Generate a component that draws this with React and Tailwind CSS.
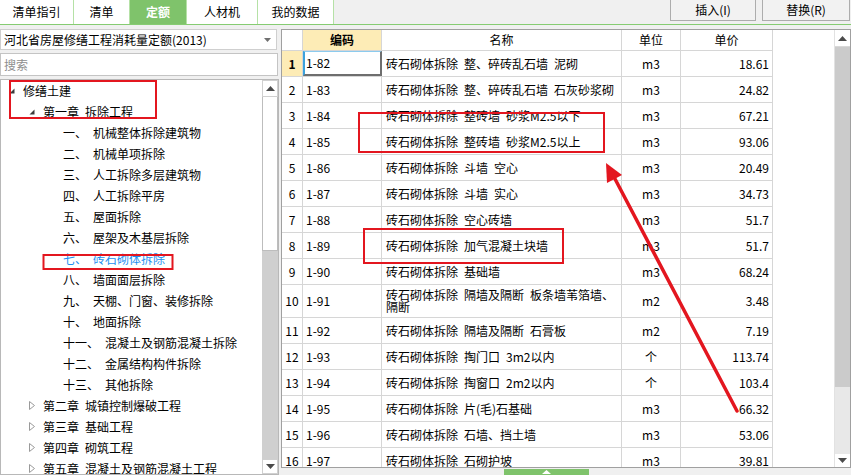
import React from 'react';

const tabs = [
  { label: '清单指引', cls: 'w-[74px] bg-white text-black' },
  { label: '清单', cls: 'w-[56px] bg-white text-black' },
  { label: '定额', cls: 'w-[57px] bg-[#7fc36b] text-white font-bold' },
  { label: '人材机', cls: 'w-[71px] bg-white text-black' },
  { label: '我的数据', cls: 'w-[76px] bg-white text-black' },
];

const chapterOne = [
  ['一、', '机械整体拆除建筑物'],
  ['二、', '机械单项拆除'],
  ['三、', '人工拆除多层建筑物'],
  ['四、', '人工拆除平房'],
  ['五、', '屋面拆除'],
  ['六、', '屋架及木基层拆除'],
  ['七、', '砖石砌体拆除'],
  ['八、', '墙面面层拆除'],
  ['九、', '天棚、门窗、装修拆除'],
  ['十、', '地面拆除'],
  ['十一、', '混凝土及钢筋混凝土拆除'],
  ['十二、', '金属结构构件拆除'],
  ['十三、', '其他拆除'],
];

const otherChapters = [
  ['第二章', '城镇控制爆破工程'],
  ['第三章', '基础工程'],
  ['第四章', '砌筑工程'],
  ['第五章', '混凝土及钢筋混凝土工程'],
];

const rows = [
  ['1-82', '砖石砌体拆除 整、碎砖乱石墙 泥砌', 'm3', '18.61'],
  ['1-83', '砖石砌体拆除 整、碎砖乱石墙 石灰砂浆砌', 'm3', '24.82'],
  ['1-84', '砖石砌体拆除 整砖墙 砂浆M2.5以下', 'm3', '67.21'],
  ['1-85', '砖石砌体拆除 整砖墙 砂浆M2.5以上', 'm3', '93.06'],
  ['1-86', '砖石砌体拆除 斗墙 空心', 'm3', '20.49'],
  ['1-87', '砖石砌体拆除 斗墙 实心', 'm3', '34.73'],
  ['1-88', '砖石砌体拆除 空心砖墙', 'm3', '51.7'],
  ['1-89', '砖石砌体拆除 加气混凝土块墙', 'm3', '51.7'],
  ['1-90', '砖石砌体拆除 基础墙', 'm3', '68.24'],
  ['1-91', '砖石砌体拆除 隔墙及隔断 板条墙苇箔墙、隔断', 'm2', '3.48'],
  ['1-92', '砖石砌体拆除 隔墙及隔断 石膏板', 'm2', '7.19'],
  ['1-93', '砖石砌体拆除 掏门口 3m2以内', '个', '113.74'],
  ['1-94', '砖石砌体拆除 掏窗口 2m2以内', '个', '103.4'],
  ['1-95', '砖石砌体拆除 片(毛)石基础', 'm3', '66.32'],
  ['1-96', '砖石砌体拆除 石墙、挡土墙', 'm3', '53.06'],
  ['1-97', '砖石砌体拆除 石砌护坡', 'm3', '39.81'],
];

const spaced = (s) => s.split(' ').join('\u2002');

function UpArrow() {
  return (
    <svg width="9" height="5" viewBox="0 0 9 5">
      <polygon points="0,5 4.5,0 9,5" fill="#4a4a4a" />
    </svg>
  );
}

function DownArrow() {
  return (
    <svg width="9" height="5" viewBox="0 0 9 5">
      <polygon points="0,0 9,0 4.5,5" fill="#4a4a4a" />
    </svg>
  );
}

function TopBar() {
  return (
    <div className="flex h-[25px] border-b border-[#86cc72]">
      <div className="flex h-[24px]">
        {tabs.map((t) => (
          <div
            key={t.label}
            className={`${t.cls} flex items-center justify-center border-r border-[#b5e1a6]`}
          >
            {t.label}
          </div>
        ))}
      </div>
      <div className="ml-auto flex gap-[6px] pr-[1px]">
        <button className="w-[86px] h-[21px] border border-t-0 border-[#adadad] bg-[#f2f2f2] flex items-center justify-center">
          插入(I)
        </button>
        <button className="w-[88px] h-[21px] border border-t-0 border-[#adadad] bg-[#f2f2f2] flex items-center justify-center">
          替换(R)
        </button>
      </div>
    </div>
  );
}

function Expanded() {
  return (
    <svg width="6" height="6" viewBox="0 0 6 6" className="mr-[8px]">
      <polygon points="5.5,0.5 5.5,5.5 0.5,5.5" fill="#3c3c3c" />
    </svg>
  );
}

function Collapsed() {
  return (
    <svg width="6" height="9" viewBox="0 0 6 9" className="mr-[8px]">
      <polygon points="0.5,0.5 5.5,4.5 0.5,8.5" fill="none" stroke="#9a9a9a" />
    </svg>
  );
}

function TreePanel() {
  return (
    <div className="mt-[3px] flex-1 flex border border-[#b8b8b8] bg-white overflow-hidden">
      <div className="flex-1 overflow-hidden">
        <div className="flex items-center h-[21px] pl-[8px]">
          <Expanded />
          <span>修缮土建</span>
        </div>
        <div className="flex items-center h-[21px] pl-[28px]">
          <Expanded />
          <span>第一章&#8194;拆除工程</span>
        </div>
        {chapterOne.map(([num, name]) => (
          <div
            key={num}
            className={`flex items-center h-[21px] pl-[62px] ${num === '七、' ? 'text-[#1e8ff0]' : ''}`}
          >
            <span className="mr-[6px]">{num}</span>
            <span>{name}</span>
          </div>
        ))}
        {otherChapters.map(([ch, name]) => (
          <div key={ch} className="flex items-center h-[21px] pl-[28px]">
            <Collapsed />
            <span className="mr-[6px]">{ch}</span>
            <span>{name}</span>
          </div>
        ))}
      </div>
      <div className="w-[16px] flex flex-col">
        <div className="h-[17px] bg-white border border-[#d0d0d0] flex items-center justify-center">
          <UpArrow />
        </div>
        <div className="h-[154px] bg-white border-x border-b border-[#bdbdbd]" />
        <div className="flex-1 bg-[#cfcfcf]" />
        <div className="h-[15px] bg-white border border-[#d0d0d0] flex items-center justify-center">
          <DownArrow />
        </div>
      </div>
    </div>
  );
}

function LeftPanel() {
  return (
    <div className="w-[279px] flex flex-col">
      <div className="h-[21px] w-[277px] border border-[#cfcfcf] bg-white flex items-center justify-between pl-[3px] pr-[5px]">
        <span>河北省房屋修缮工程消耗量定额(2013)</span>
        <svg width="7" height="4" viewBox="0 0 7 4">
          <polygon points="0,0 7,0 3.5,4" fill="#707070" />
        </svg>
      </div>
      <div className="mt-[3px] h-[23px] w-[278px] border border-[#c4c4c4] bg-white flex items-center pl-[3px] text-[#8e8e8e]">
        搜索
      </div>
      <TreePanel />
    </div>
  );
}

function Table() {
  return (
    <div className="w-[491px]">
      <div className="grid grid-cols-[21px_79px_240px_59px_92px] h-[21px] border-b border-[#d6d6d6]">
        <div className="border-r border-[#d6d6d6]" />
        <div className="border-r border-[#d6d6d6] bg-[#fdecb6] font-bold flex items-center justify-center">编码</div>
        <div className="border-r border-[#d6d6d6] flex items-center justify-center">名称</div>
        <div className="border-r border-[#d6d6d6] flex items-center justify-center">单位</div>
        <div className="border-r border-[#d6d6d6] flex items-center justify-center">单价</div>
      </div>
      {rows.map(([code, name, unit, price], i) => {
        const first = i === 0;
        return (
          <div
            key={code}
            className={`grid grid-cols-[21px_79px_240px_59px_92px] border-b border-[#d6d6d6] ${i === 9 ? 'h-[33px]' : 'h-[26px]'}`}
          >
            <div
              className={`border-r border-[#d6d6d6] flex items-center justify-center ${first ? 'bg-[#fdecb6] font-bold' : ''}`}
            >
              {i + 1}
            </div>
            <div
              className={
                first
                  ? 'flex items-center pl-[1px] border-l-2 border-l-[#3ca2dc] border-t border-t-[#8ccbee] border-r-2 border-r-[#6e6e6e] border-b-2 border-b-[#6e6e6e]'
                  : 'flex items-center pl-[3px] border-r border-[#d6d6d6]'
              }
            >
              {code}
            </div>
            <div className="border-r border-[#d6d6d6] flex items-center pl-[4px] pr-[2px] leading-[12px]">
              <span>{spaced(name)}</span>
            </div>
            <div className="border-r border-[#d6d6d6] flex items-center justify-center">{unit}</div>
            <div className="border-r border-[#d6d6d6] flex items-center justify-end pr-[3px]">{price}</div>
          </div>
        );
      })}
    </div>
  );
}

function RightPanel() {
  return (
    <div className="ml-[2px] w-[570px] flex flex-col">
      <div className="h-[441px] border border-[#a0a0a0] bg-white flex overflow-hidden">
        <div className="overflow-hidden">
          <Table />
        </div>
        <div className="flex-1" />
        <div className="w-[16px] flex flex-col border-l border-[#e2e2e2]">
          <div className="h-[17px] bg-white border-b border-[#d8d8d8] flex items-center justify-center">
            <UpArrow />
          </div>
          <div className="h-[340px] bg-[#cbcbcb]" />
          <div className="flex-1 bg-[#e8e8e8]" />
          <div className="h-[13px] bg-white flex items-center justify-center">
            <DownArrow />
          </div>
        </div>
      </div>
      <div className="pl-[223px] pt-[1px]">
        <div className="w-[85px] h-[6px] bg-[#7fc36b] flex justify-center">
          <svg width="9" height="5" viewBox="0 0 9 5">
            <polygon points="0,5 4.5,1 9,5" fill="#ffffff" />
          </svg>
        </div>
      </div>
    </div>
  );
}

function Annotations() {
  const red = '#e3161f';
  return (
    <svg
      className="absolute inset-0 pointer-events-none"
      width="851"
      height="475"
      viewBox="0 0 851 475"
    >
      <rect x="10" y="81" width="146" height="37" fill="none" stroke={red} strokeWidth="2" />
      <rect x="43.5" y="255" width="129" height="14" fill="none" stroke={red} strokeWidth="2" />
      <rect x="359" y="113" width="245" height="39" fill="none" stroke={red} strokeWidth="2" />
      <rect x="364" y="229" width="199" height="34" fill="none" stroke={red} strokeWidth="2" />
      <line x1="737" y1="411" x2="614" y2="177" stroke={red} strokeWidth="3.5" strokeLinecap="round" />
      <polygon points="606,163 622,175 607,183" fill={red} />
    </svg>
  );
}

export default function App() {
  return (
    <div className="relative w-[851px] h-[475px] overflow-hidden bg-[#f0f0f0] text-[12px] leading-[14px] text-black font-['Noto_Sans_CJK_SC',sans-serif]">
      <TopBar />
      <div className="flex mt-[4px] h-[446px]">
        <LeftPanel />
        <RightPanel />
      </div>
      <Annotations />
    </div>
  );
}
